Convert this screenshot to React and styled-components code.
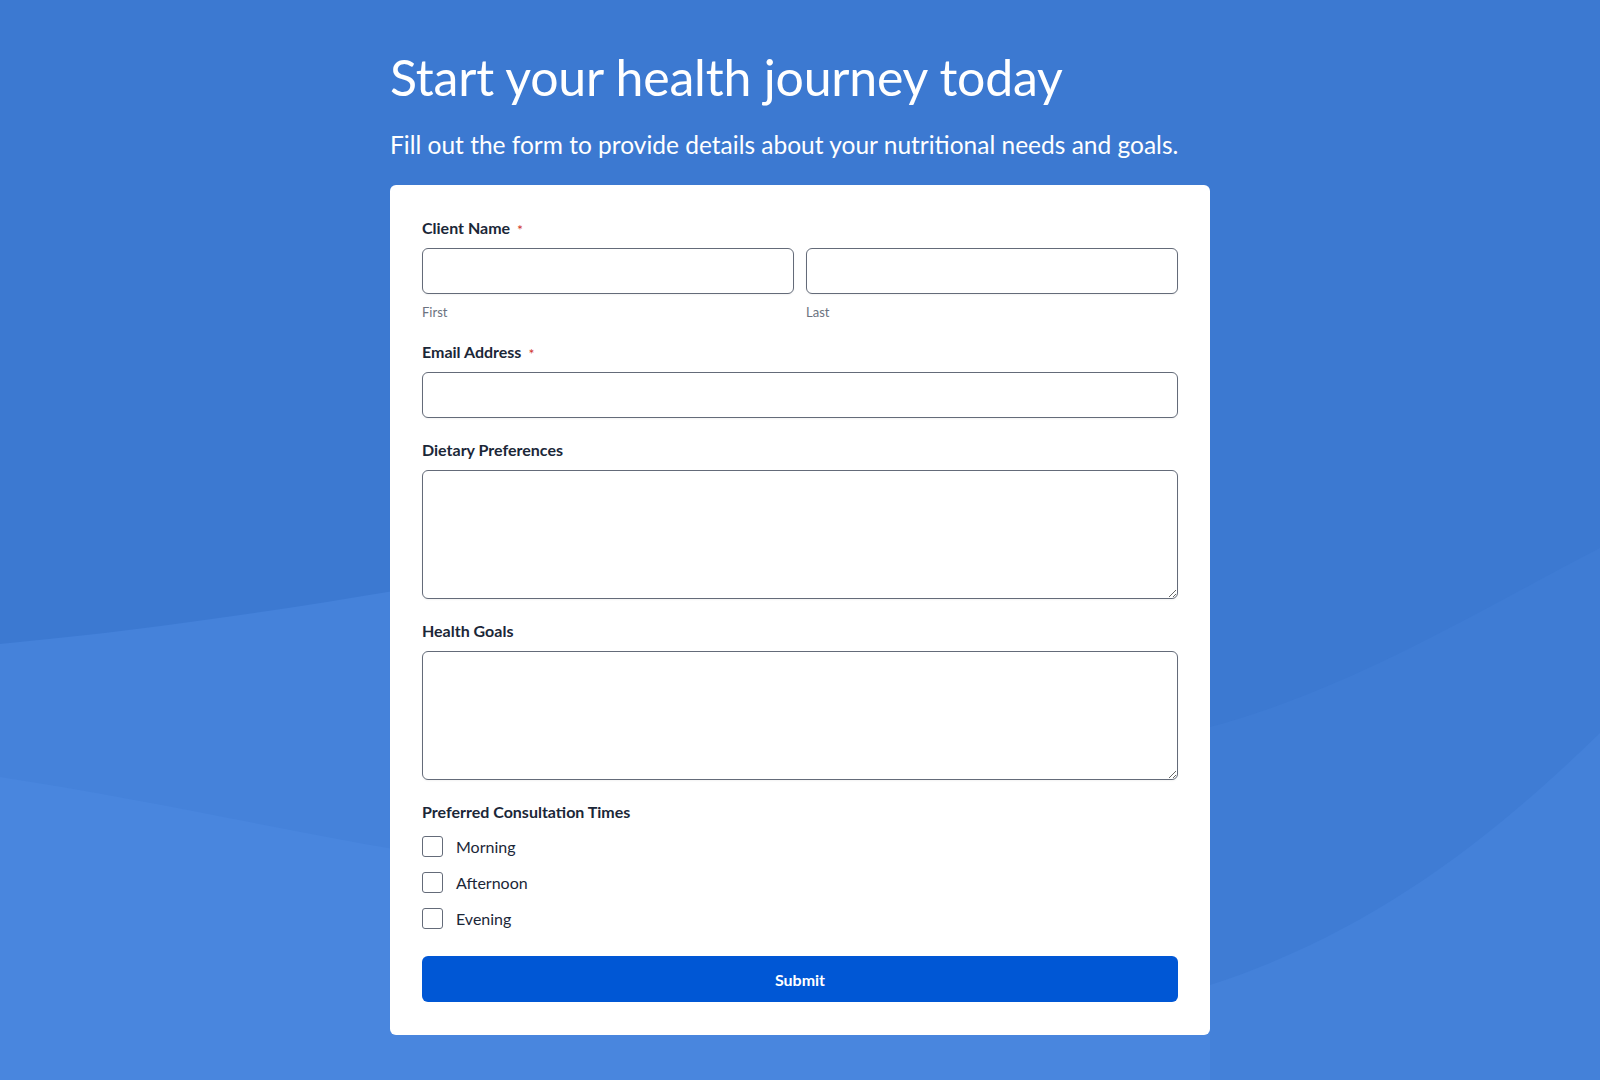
import React from 'react';
import styled, { createGlobalStyle } from 'styled-components';

const GlobalStyle = createGlobalStyle`
  html, body {
    margin: 0;
    padding: 0;
    background: #3c79d1;
  }
  body {
    font-family: Lato, "Open Sans", sans-serif;
  }
  * { box-sizing: border-box; }
`;

const Page = styled.div`
  position: relative;
  min-height: 1080px;
  overflow: hidden;
`;

const Backdrop = styled.svg`
  position: absolute;
  inset: 0;
  width: 100%;
  height: 100%;
  z-index: 0;
`;

const Wrap = styled.main`
  position: relative;
  z-index: 1;
  width: 820px;
  margin: 0 auto;
  padding: 47px 0 43px;
`;

const Title = styled.h1`
  margin: 0;
  color: #fff;
  font-family: Lato, sans-serif;
  font-weight: 400;
  font-size: 50px;
  line-height: 60px;
  letter-spacing: -0.2px;
`;

const Subtitle = styled.p`
  margin: 23px 0 25px;
  color: #fff;
  font-size: 24.5px;
  line-height: 30px;
  font-weight: 400;
`;

const Card = styled.form`
  background: #fff;
  border-radius: 6px;
  padding: 32px 32px 33px;
  display: flex;
  flex-direction: column;
`;

const Field = styled.div`
  margin-bottom: 21px;
`;

const Label = styled.div`
  color: #1b2738;
  font-size: 16px;
  font-weight: 700;
  line-height: 22px;
  margin-bottom: ${p => p.$gap || 9}px;
  display: flex;
  align-items: flex-start;
`;

const Star = styled.span`
  color: #d0342c;
  font-size: 14px;
  line-height: 14px;
  padding-top: 6px;
  margin-left: 7px;
  font-weight: 400;
`;

const NameRow = styled.div`
  display: grid;
  grid-template-columns: 1fr 1fr;
  gap: 12px;
`;

const Input = styled.input`
  display: block;
  width: 100%;
  height: 46px;
  border: 1px solid #646b79;
  border-radius: 6px;
  box-shadow: 0 1px 2px rgba(0, 0, 0, 0.05);
  font: inherit;
  padding: 0 12px;
  background: #fff;
`;

const Area = styled.textarea`
  display: block;
  width: 100%;
  height: 129px;
  border: 1px solid #646b79;
  border-radius: 6px;
  box-shadow: 0 1px 2px rgba(0, 0, 0, 0.05);
  font: inherit;
  padding: 10px 12px;
  resize: vertical;
  background: #fff;
`;

const Hint = styled.div`
  margin-top: 10px;
  font-size: 13px;
  line-height: 16px;
  color: #6b7280;
`;

const Options = styled.div`
  display: flex;
  flex-direction: column;
  gap: 15px;
`;

const Option = styled.label`
  display: flex;
  align-items: center;
  gap: 13px;
  font-size: 16px;
  line-height: 21px;
  color: #1b2738;
`;

const Box = styled.span`
  width: 21px;
  height: 21px;
  border: 1px solid #646b79;
  border-radius: 3px;
  background: #fff;
  flex: none;
`;

const Submit = styled.button`
  margin-top: 6px;
  height: 46px;
  width: 100%;
  border: none;
  border-radius: 6px;
  background: #0057d5;
  color: #fff;
  font-family: Lato, sans-serif;
  font-size: 16px;
  font-weight: 700;
`;

const times = ['Morning', 'Afternoon', 'Evening'];

export default function App() {
  return (
    <Page>
      <GlobalStyle />
      <Backdrop viewBox="0 0 1600 1080" preserveAspectRatio="none">
        <rect width="1600" height="1080" fill="#3c79d1" />
        <path d="M0,644 C150,630 280,610 400,590 C700,560 1000,700 1210,727 L1210,1080 L0,1080 Z" fill="#4582da" />
        <path d="M1210,727 C1350,690 1480,610 1600,548 L1600,1080 L1210,1080 Z" fill="#3f7cd4" />
        <path d="M0,777 C150,800 280,830 400,850 C700,900 1000,1010 1210,985 L1210,1080 L0,1080 Z" fill="#4986de" />
        <path d="M1210,985 C1380,930 1500,830 1600,733 L1600,1080 L1210,1080 Z" fill="#4481d9" />
      </Backdrop>
      <Wrap>
        <Title>Start your health journey today</Title>
        <Subtitle>Fill out the form to provide details about your nutritional needs and goals.</Subtitle>
        <Card onSubmit={e => e.preventDefault()}>
          <Field>
            <Label>Client Name<Star>*</Star></Label>
            <NameRow>
              <div>
                <Input type="text" />
                <Hint>First</Hint>
              </div>
              <div>
                <Input type="text" />
                <Hint>Last</Hint>
              </div>
            </NameRow>
          </Field>
          <Field>
            <Label>Email Address<Star>*</Star></Label>
            <Input type="email" />
          </Field>
          <Field>
            <Label>Dietary Preferences</Label>
            <Area />
          </Field>
          <Field>
            <Label>Health Goals</Label>
            <Area />
          </Field>
          <Field>
            <Label $gap={13}>Preferred Consultation Times</Label>
            <Options>
              {times.map(t => (
                <Option key={t}>
                  <Box />
                  {t}
                </Option>
              ))}
            </Options>
          </Field>
          <Submit type="submit">Submit</Submit>
        </Card>
      </Wrap>
    </Page>
  );
}
